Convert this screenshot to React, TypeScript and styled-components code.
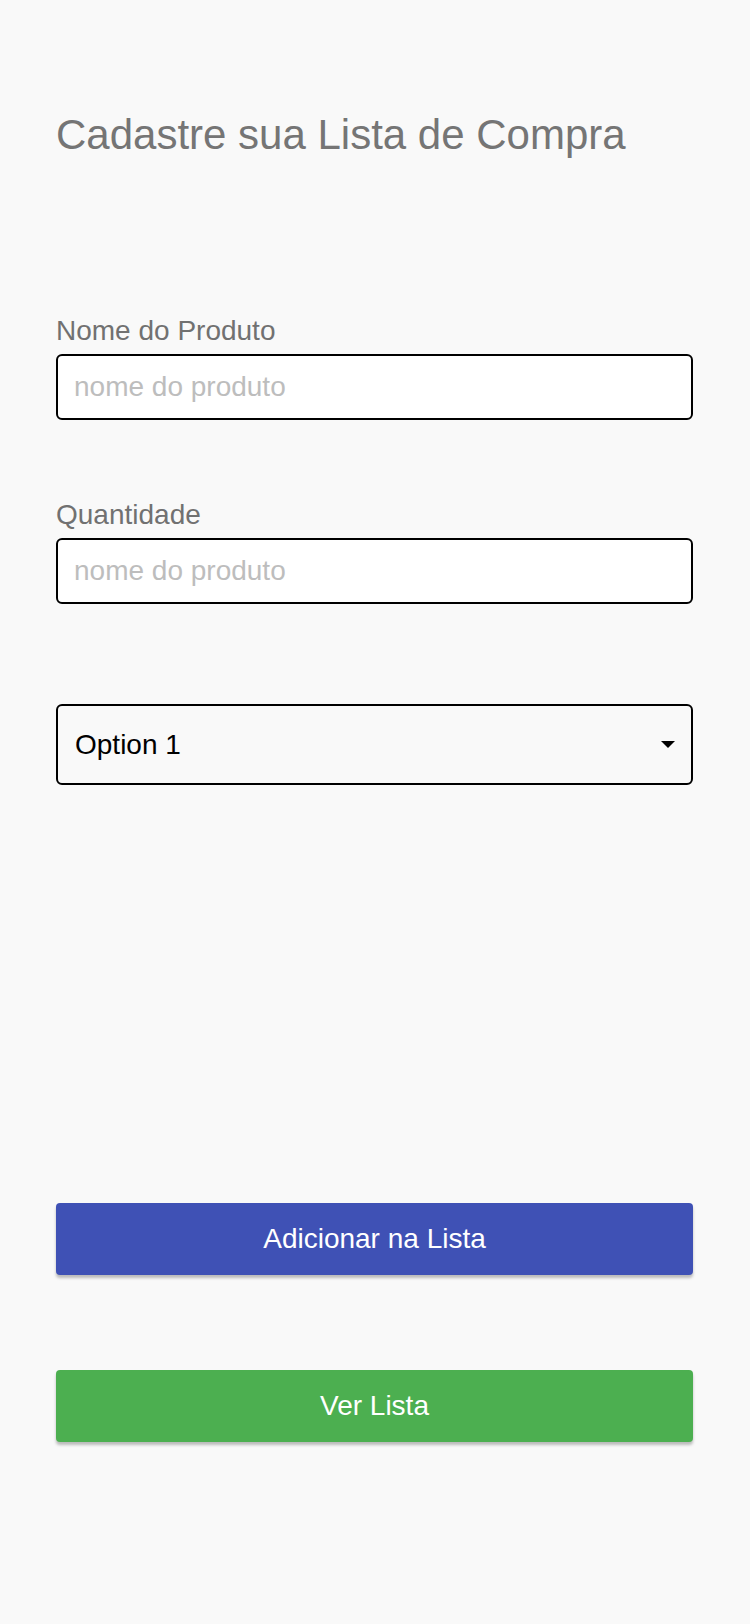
import React from "react";
import styled, { createGlobalStyle } from "styled-components";

const Global = createGlobalStyle`
  html, body { margin: 0; padding: 0; background: #f9f9f9; }
  body { font-family: "Liberation Sans", Arial, Helvetica, sans-serif; }
  * { box-sizing: border-box; }
`;

const Page = styled.main`
  min-height: 1624px;
  background: #f9f9f9;
  padding: 111px 57px 0 56px;
  display: flex;
  flex-direction: column;
`;

const Title = styled.h1`
  margin: 0;
  font-size: 42px;
  line-height: 48px;
  font-weight: 400;
  color: #757575;
`;

const Field = styled.div<{ $top: number }>`
  display: flex;
  flex-direction: column;
  gap: 7px;
  margin-top: ${(p) => p.$top}px;
`;

const Label = styled.label`
  font-size: 28px;
  line-height: 32px;
  color: #717171;
`;

const Input = styled.input`
  height: 66px;
  width: 100%;
  border: 2px solid #000;
  border-radius: 6px;
  background: #fff;
  padding: 0 16px;
  font-family: inherit;
  font-size: 28px;
  color: #000;
  outline: none;
  &::placeholder { color: #bdbdbd; }
`;

const SelectBox = styled.div`
  margin-top: 100px;
  height: 81px;
  border: 2px solid #000;
  border-radius: 6px;
  background: #f9f9f9;
  display: flex;
  align-items: center;
  justify-content: space-between;
  padding: 0 16px 0 17px;
  font-size: 28px;
  color: #000;
`;

const Arrow = styled.span`
  width: 0;
  height: 0;
  border-left: 7px solid transparent;
  border-right: 7px solid transparent;
  border-top: 7px solid #000;
`;

const Button = styled.button<{ $bg: string; $top: number }>`
  margin-top: ${(p) => p.$top}px;
  height: 72px;
  width: 100%;
  border: none;
  border-radius: 4px;
  background: ${(p) => p.$bg};
  color: #fff;
  font-family: inherit;
  font-size: 28px;
  box-shadow: 0 3px 3px rgba(0, 0, 0, 0.25);
  cursor: pointer;
`;

export default function App() {
  return (
    <>
      <Global />
      <Page>
        <Title>Cadastre sua Lista de Compra</Title>
        <Field $top={156}>
          <Label>Nome do Produto</Label>
          <Input placeholder="nome do produto" />
        </Field>
        <Field $top={79}>
          <Label>Quantidade</Label>
          <Input placeholder="nome do produto" />
        </Field>
        <SelectBox>
          <span>Option 1</span>
          <Arrow />
        </SelectBox>
        <Button $bg="#3f51b5" $top={418}>Adicionar na Lista</Button>
        <Button $bg="#4caf50" $top={95}>Ver Lista</Button>
      </Page>
    </>
  );
}
